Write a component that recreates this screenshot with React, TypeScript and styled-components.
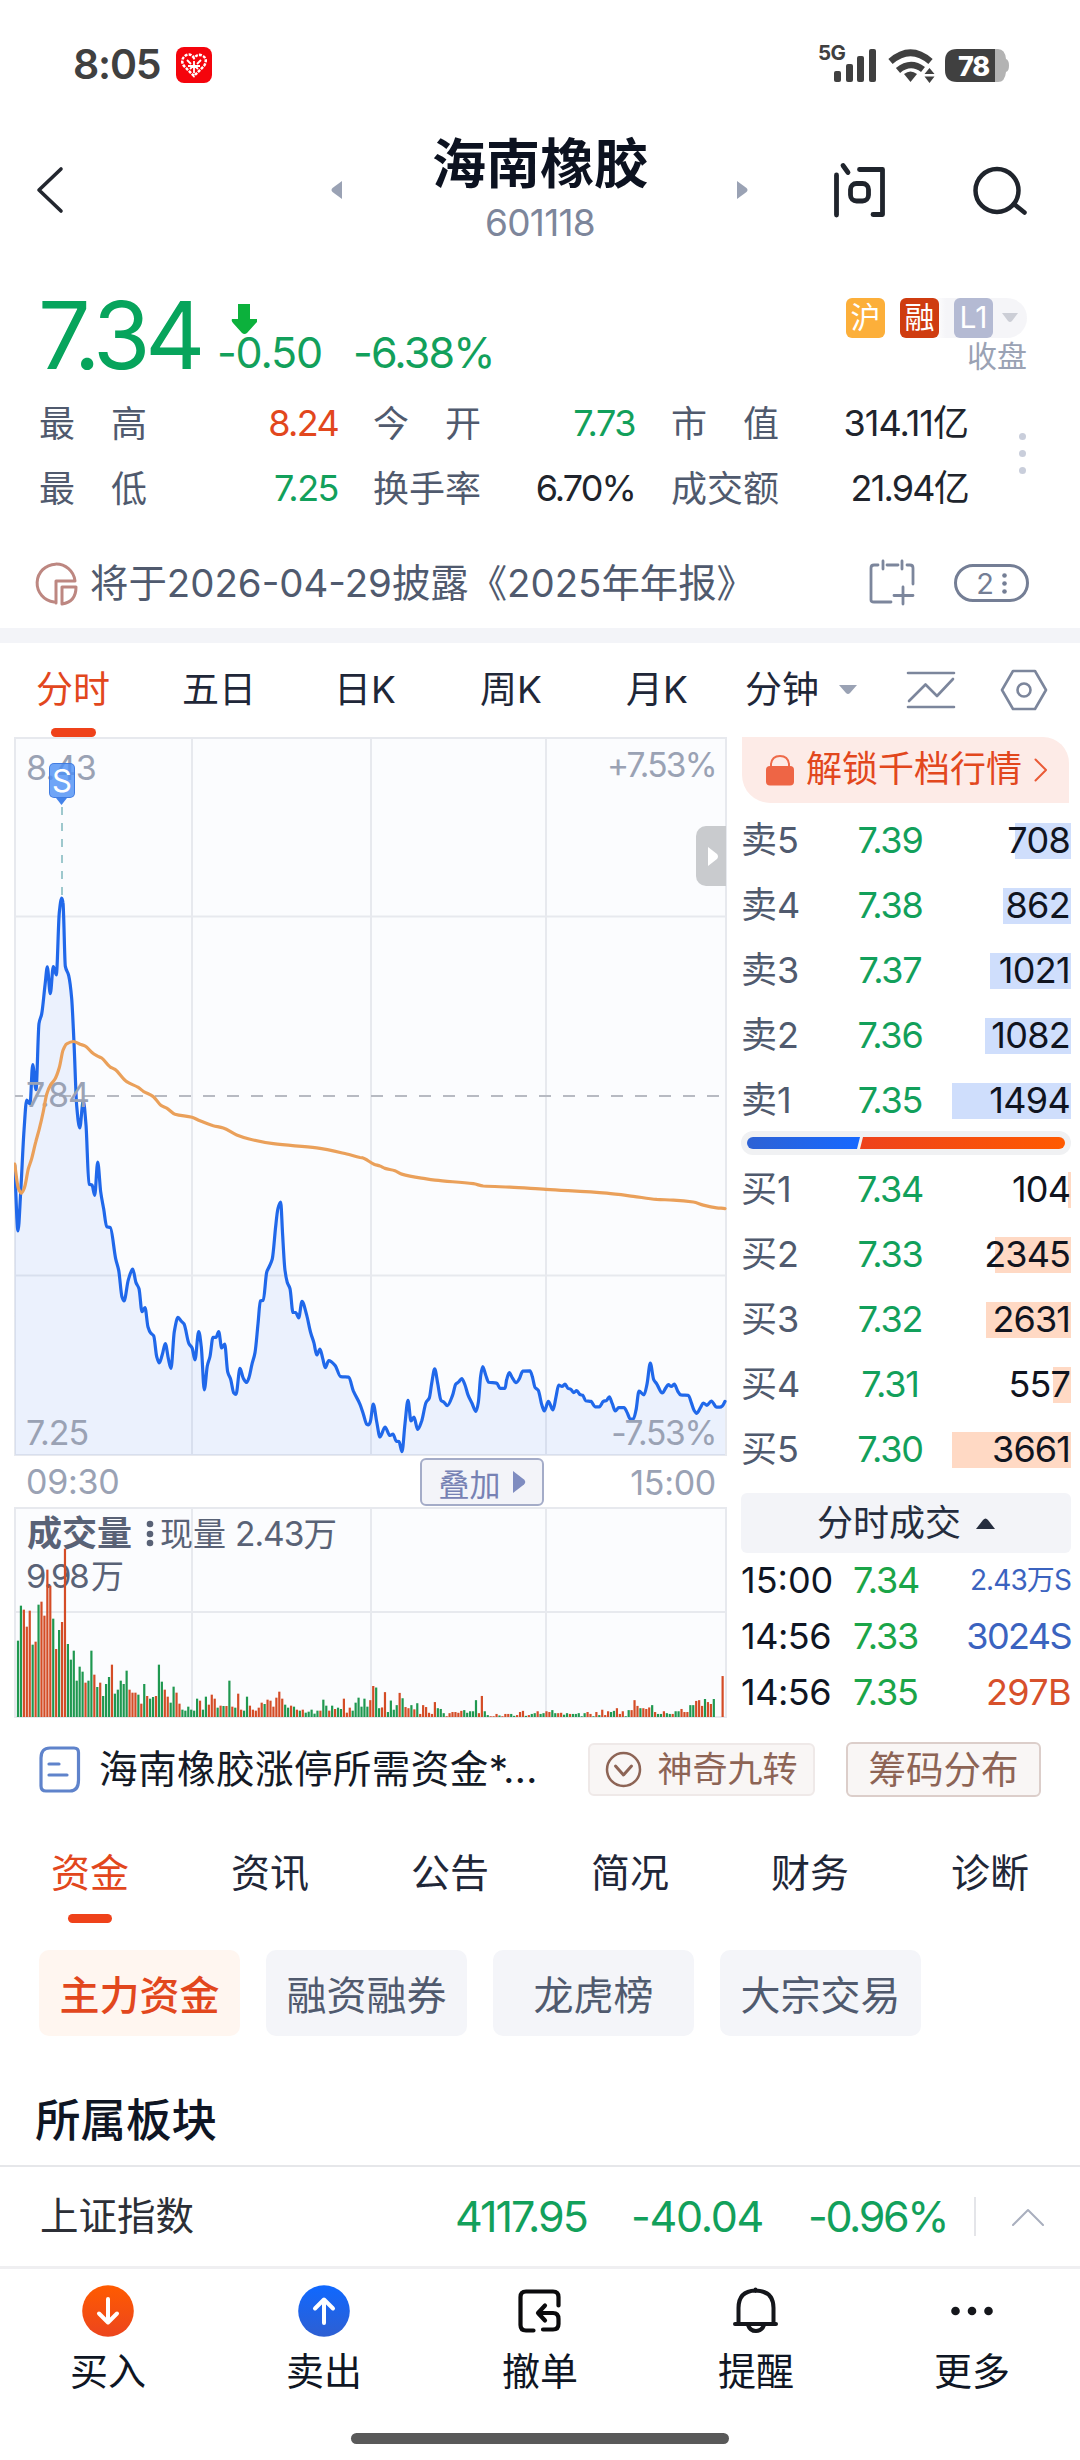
import React from "react";
import styled, { createGlobalStyle } from "styled-components";

const GREEN = "#12a05b";
const RED = "#e2471d";
const INK = "#0f1624";
const SLATE = "#505a6e";
const MUTED = "#9aa2b4";

const GlobalStyle = createGlobalStyle`
  * { box-sizing: border-box; }
  body {
    margin: 0;
    background: #fff;
    font-family: Inter, "Noto Sans CJK SC", sans-serif;
    color: ${INK};
  }
  svg { display: block; flex: none; }
`;

const Screen = styled.main`
  width: 1080px;
  height: 2460px;
  display: flex;
  flex-direction: column;
  overflow: hidden;
  background: #fff;
`;

const Text = styled.span<{ size?: number; color?: string; weight?: number; ls?: number }>`
  font-size: ${(p) => p.size ?? 36}px;
  color: ${(p) => p.color ?? "inherit"};
  font-weight: ${(p) => p.weight ?? 400};
  letter-spacing: ${(p) => p.ls ?? 0}px;
  line-height: 1.2;
  white-space: nowrap;
`;

/* ---------- status bar ---------- */

const StatusBar = styled.div`
  height: 130px;
  padding: 0 71px 0 73px;
  display: flex;
  align-items: center;
  justify-content: space-between;
  flex: none;
`;

const StatusGroup = styled.div`
  display: flex;
  align-items: center;
`;

const AppBadge = styled.div`
  width: 36px;
  height: 36px;
  margin-left: 16px;
  border-radius: 8px;
  background: #f5040c;
  display: flex;
  align-items: center;
  justify-content: center;
`;

/* ---------- header ---------- */

const Header = styled.header`
  height: 140px;
  padding: 0 52px 0 34px;
  display: grid;
  grid-template-columns: 32px 277px 394px 1fr auto;
  align-items: start;
  flex: none;
`;

const HeaderIcon = styled.div<{ top: number; align?: string }>`
  padding-top: ${(p) => p.top}px;
  display: flex;
  justify-content: ${(p) => p.align ?? "flex-start"};
`;

const TitleBlock = styled.div`
  padding-top: 3px;
  display: flex;
  flex-direction: column;
  align-items: center;
  gap: 3px;
`;

const HeaderTools = styled.div`
  display: flex;
  gap: 86px;
  padding-top: 31px;
`;

/* ---------- quote ---------- */

const Quote = styled.section`
  height: 358px;
  display: flex;
  flex-direction: column;
  flex: none;
`;

const PriceRow = styled.div`
  height: 121px;
  padding: 0 53px 0 38px;
  display: flex;
  justify-content: space-between;
`;

const PriceGroup = styled.div`
  display: flex;
`;

const ChangeBlock = styled.div`
  padding: 34px 0 0 17px;
  display: flex;
  flex-direction: column;
`;

const ChangeLine = styled.div`
  display: flex;
  gap: 31px;
  margin-top: -7px;
`;

const TagColumn = styled.div`
  display: flex;
  flex-direction: column;
  align-items: flex-end;
  padding-top: 28px;
`;

const TagPill = styled.div`
  height: 40px;
  display: flex;
  align-items: center;
  gap: 15px;
  border-radius: 8px 20px 20px 8px;
  padding-right: 9px;
  background: linear-gradient(90deg, transparent 0, transparent 88px, #f5f5f8 100px);
`;

const Tag = styled.span<{ bg: string }>`
  width: 39px;
  height: 40px;
  border-radius: 6px;
  background: ${(p) => p.bg};
  color: #fff;
  font-size: 30px;
  line-height: 39px;
  text-align: center;
`;

const Stats = styled.div`
  height: 130px;
  padding-left: 39px;
  display: grid;
  grid-template-columns: 299px 35px 262px 36px 297px 1fr;
  grid-template-rows: 65px 65px;
  align-items: center;
`;

const Stat = styled.div`
  display: flex;
  justify-content: space-between;
  align-items: center;
`;

const StatLabel = styled.span`
  width: 108px;
  font-size: 36px;
  color: ${SLATE};
  line-height: 44px;
  display: flex;
  justify-content: space-between;
`;

const MoreDots = styled.div`
  grid-row: 1 / 3;
  grid-column: 6;
  display: flex;
  flex-direction: column;
  align-items: center;
  gap: 10px;
  padding: 0 3px 6px 0;
  align-self: center;
  i { width: 7px; height: 7px; border-radius: 50%; background: #c9cedb; }
`;

const Notice = styled.div`
  height: 90px;
  margin-top: 17px;
  padding: 0 51px 0 35px;
  display: flex;
  align-items: center;
`;

const CountPill = styled.span`
  width: 75px;
  height: 38px;
  border: 3px solid #747e95;
  border-radius: 19px;
  display: flex;
  align-items: center;
  justify-content: center;
  gap: 8px;
  margin-left: 39px;
  font-size: 29px;
  color: #747e95;
`;

const Band = styled.div`
  height: 15px;
  background: #f3f4f8;
  flex: none;
`;

/* ---------- period tabs ---------- */

const PeriodTabs = styled.nav`
  height: 94px;
  display: grid;
  grid-template-columns: 146px 146px 146px 146px 146px 142px 118px 1fr;
  align-items: center;
  justify-items: center;
  padding-right: 22px;
  flex: none;
`;

const PeriodTab = styled.div<{ active?: boolean; menu?: boolean }>`
  height: 94px;
  display: flex;
  flex-direction: ${(p) => (p.menu ? "row" : "column")};
  gap: ${(p) => (p.menu ? 20 : 0)}px;
  align-items: center;
  justify-content: space-between;
  font-size: 37px;
  line-height: 94px;
  color: ${(p) => (p.active ? "#e2471d" : "#1f2738")};
  white-space: nowrap;
`;

const Underline = styled.i`
  width: 45px;
  height: 9px;
  border-radius: 5px;
  background: #ef421a;
  margin-top: -9px;
  flex: none;
`;

/* ---------- market area ---------- */

const Market = styled.section`
  height: 980px;
  padding-left: 14px;
  display: grid;
  grid-template-columns: 713px 330px;
  column-gap: 14px;
  flex: none;
`;

const ChartColumn = styled.div`
  display: flex;
  flex-direction: column;
`;

const Plot = styled.div<{ h: number }>`
  position: relative;
  height: ${(p) => p.h}px;
`;

const Overlay = styled.span<{ top: number; left?: number; right?: number; size?: number; color?: string; weight?: number; ls?: number }>`
  position: absolute;
  top: ${(p) => p.top}px;
  ${(p) => (p.left !== undefined ? `left: ${p.left}px;` : "")}
  ${(p) => (p.right !== undefined ? `right: ${p.right}px;` : "")}
  font-size: ${(p) => p.size ?? 34}px;
  font-weight: ${(p) => p.weight ?? 400};
  letter-spacing: ${(p) => p.ls ?? 0}px;
  line-height: 40px;
  color: ${(p) => p.color ?? MUTED};
  white-space: nowrap;
`;

const LineLayer = styled.svg`
  position: absolute;
  left: 0;
  top: 0;
`;

const Marker = styled.div`
  position: absolute;
  left: 35px;
  top: 26px;
  width: 26px;
  height: 35px;
  border-radius: 5px;
  border: 1.5px solid rgba(58, 117, 222, 0.85);
  background: rgba(76, 142, 245, 0.8);
  color: #fff;
  font-size: 31px;
  line-height: 33px;
  text-align: center;
  display: flex;
  justify-content: center;
`;

const Drawer = styled.div`
  position: absolute;
  right: 1px;
  top: 89px;
  width: 30px;
  height: 60px;
  padding-left: 4px;
  border-radius: 10px 0 0 10px;
  background: #c9cbce;
  display: flex;
  align-items: center;
  justify-content: center;
`;

const TimeAxis = styled.div`
  height: 51px;
  padding: 1px 11px 0 12px;
  display: grid;
  grid-template-columns: 394px 124px 1fr;
  align-items: center;
`;

const AxisEnd = styled.span`
  font-size: 34px;
  letter-spacing: -0.3px;
  line-height: 41px;
  color: ${MUTED};
  text-align: right;
`;

const OverlayButton = styled.span`
  height: 48px;
  border: 2px solid #a4acc8;
  border-radius: 6px;
  background: #f3f4f9;
  color: #7782b4;
  font-size: 31px;
  display: flex;
  align-items: center;
  justify-content: center;
  gap: 12px;
`;

const Book = styled.aside`
  display: flex;
  flex-direction: column;
`;

const Unlock = styled.div`
  width: 327px;
  height: 66px;
  margin-left: 1px;
  padding-left: 24px;
  border-radius: 0 26px 0 28px;
  background: #fdebe7;
  color: ${RED};
  display: flex;
  align-items: center;
  gap: 12px;
  flex: none;
`;

const Levels = styled.div<{ mt: number }>`
  margin-top: ${(p) => p.mt}px;
  display: flex;
  flex-direction: column;
`;

const Level = styled.div`
  height: 65px;
  display: grid;
  grid-template-columns: 87px 124px 119px;
  align-items: center;
`;

const Center = styled.div`
  text-align: center;
  line-height: 0;
`;

const Depth = styled.div<{ w: number; tone: string }>`
  height: 36px;
  display: flex;
  align-items: center;
  justify-content: flex-end;
  padding-right: 1px;
  background: linear-gradient(${(p) => p.tone}, ${(p) => p.tone}) right / ${(p) => p.w}px 100% no-repeat;
`;

const Ratio = styled.div`
  width: 330px;
  height: 24px;
  margin-top: -2px;
  padding: 6px;
  border-radius: 12px;
  background: #f0f1f3;
  display: flex;
  flex: none;
`;

const SellShare = styled.i`
  width: 113px;
  border-radius: 6px 0 0 6px;
  background: linear-gradient(90deg, #2e62d4, #1668ff);
  clip-path: polygon(0 0, 100% 0, calc(100% - 3px) 100%, 0 100%);
`;

const BuyShare = styled.i`
  flex: 1;
  border-radius: 0 6px 6px 0;
  background: linear-gradient(90deg, #ee421c, #ff5a00);
  clip-path: polygon(3px 0, 100% 0, 100% 100%, 0 100%);
`;

const TradesHead = styled.div`
  height: 60px;
  margin-top: 11px;
  padding-top: 1px;
  border-radius: 6px;
  background: #f3f4f8;
  color: #252d3e;
  display: flex;
  align-items: center;
  justify-content: center;
  gap: 15px;
  flex: none;
`;

const Trade = styled.div`
  height: 56px;
  display: grid;
  grid-template-columns: 112px 1fr auto;
  align-items: center;
  flex: none;
`;

/* ---------- lower sections ---------- */

const NewsRow = styled.div`
  height: 104px;
  padding: 0 39px;
  display: flex;
  align-items: center;
  flex: none;
`;

const NewsTitle = styled.span`
  width: 489px;
  margin-left: 18px;
  font-size: 38.6px;
  letter-spacing: 0.4px;
  line-height: 50px;
  color: #141a26;
  white-space: nowrap;
`;

const ToolButton = styled.span<{ w: number; h: number; edge: string; ml?: number }>`
  width: ${(p) => p.w}px;
  height: ${(p) => p.h}px;
  margin-left: ${(p) => p.ml ?? 0}px;
  border: 2px solid ${(p) => p.edge};
  border-radius: 6px;
  background: #f9f6f5;
  color: #8d6455;
  display: flex;
  align-items: center;
  justify-content: center;
  gap: 15px;
  flex: none;
`;

const SectionTabs = styled.nav`
  height: 110px;
  display: grid;
  grid-template-columns: repeat(6, 180px);
  flex: none;
`;

const SectionTab = styled.div<{ active?: boolean }>`
  display: flex;
  flex-direction: column;
  align-items: center;
  padding-top: 24px;
  font-size: 39px;
  line-height: 56px;
  color: ${(p) => (p.active ? RED : "#1f2738")};
  i { margin-top: 13px; width: 44px; }
`;

const Chips = styled.div`
  height: 86px;
  margin-top: 19px;
  padding-left: 39px;
  display: flex;
  gap: 26px;
  flex: none;
`;

const Chip = styled.span<{ active?: boolean }>`
  width: 201px;
  height: 86px;
  border-radius: 10px;
  background: ${(p) => (p.active ? "#fff6f0" : "#f4f5f9")};
  color: ${(p) => (p.active ? RED : SLATE)};
  font-weight: ${(p) => (p.active ? 500 : 400)};
  font-size: 40px;
  display: flex;
  align-items: center;
  justify-content: center;
`;

const SectionTitle = styled.h2`
  margin: 0;
  height: 129px;
  padding: 55px 0 0 35px;
  font-size: 45.5px;
  font-weight: 500;
  line-height: 60px;
  flex: none;
`;

const IndexRow = styled.div`
  height: 104px;
  border-top: 2px solid #e6e7ea;
  border-bottom: 3px solid #efeff1;
  padding: 0 36px 0 40px;
  display: grid;
  grid-template-columns: 415px 176px 177px 166px 1fr;
  align-items: center;
  flex: none;
`;

const IndexToggle = styled.div`
  height: 39px;
  border-left: 2px solid #e4e5e9;
  display: flex;
  align-items: center;
  justify-content: flex-end;
`;

const BottomNav = styled.nav`
  height: 162px;
  padding-top: 16px;
  display: grid;
  grid-template-columns: repeat(5, 216px);
  flex: none;
`;

const NavItem = styled.div`
  display: flex;
  flex-direction: column;
  align-items: center;
  gap: 12px;
`;

const HomeBar = styled.div`
  width: 378px;
  height: 11px;
  border-radius: 6px;
  background: #595959;
  margin: 2px auto 0;
  flex: none;
`;

/* ---------- chart data ---------- */

type Pt = [number, number];

const toPoints = (flat: number[], ox: number, oy: number): Pt[] => {
  const out: Pt[] = [];
  for (let i = 0; i < flat.length; i += 2) out.push([ox + flat[i] / 3, oy + flat[i + 1] / 2.613]);
  return out;
};

const MORNING = [
  44, 745, 54, 917, 62, 815, 72, 655, 80, 575, 90, 585, 98, 482, 108, 548, 117, 375, 125, 350, 135, 275, 142, 227, 151,
  297, 160, 226, 169, 248, 178, 85, 185, 47, 189, 60, 196, 225, 206, 250, 215, 310, 222, 425, 230, 590, 239, 648, 250,
  577, 258, 640, 267, 795, 276, 797, 284, 824, 293, 737, 302, 815, 311, 860, 320, 906, 331, 908, 347, 990, 356, 1020,
  366, 1090, 372, 1100, 385, 1045, 398, 1017, 408, 1052, 417, 1068, 426, 1128, 435, 1117, 444, 1168, 452, 1184, 461,
  1191, 470, 1245, 478, 1262, 487, 1240, 496, 1211, 505, 1250, 513, 1276, 523, 1180, 534, 1143, 543, 1152, 552, 1160,
  567, 1212, 576, 1222, 585, 1254, 596, 1180, 604, 1220, 613, 1332, 622, 1270, 630, 1245, 639, 1195, 648, 1195, 656,
  1180, 665, 1223, 674, 1213, 683, 1285, 692, 1305, 701, 1340, 708, 1344, 720, 1276, 730, 1302, 740, 1313, 747, 1300,
  756, 1265, 765, 1235, 774, 1160, 781, 1100, 790, 1098, 800, 1025, 808, 1010, 817, 990, 827, 905, 834, 858, 842, 842,
  848, 930, 855, 1020, 862, 1052, 870, 1068, 879, 1130, 887, 1130, 896, 1144, 906, 1101, 920, 1137, 932, 1183, 942,
  1210, 950, 1241, 960, 1226, 968, 1250, 976, 1274, 986, 1256, 1005, 1268, 1022, 1298, 1046, 1299, 1060, 1335, 1080,
  1370, 1090, 1395, 1100, 1422, 1105, 1424,
];

const AFTERNOON = [
  31, 710, 40, 664, 50, 710, 60, 750, 75, 724, 90, 746, 99, 742, 109, 761, 117, 762, 126, 788, 135, 715, 144, 654, 153,
  708, 162, 698, 173, 730, 185, 708, 198, 660, 208, 648, 215, 610, 224, 572, 233, 610, 243, 654, 252, 659, 262, 668, 278,
  640, 287, 612, 296, 606, 305, 597, 315, 614, 324, 640, 336, 662, 348, 683, 355, 660, 362, 590, 368, 566, 377, 588, 386,
  607, 410, 609, 420, 623, 435, 623, 440, 600, 448, 582, 457, 595, 468, 608, 478, 598, 488, 578, 510, 577, 517, 592, 525,
  620, 535, 628, 545, 665, 553, 682, 565, 657, 579, 679, 588, 645, 596, 614, 606, 618, 615, 612, 624, 623, 632, 625, 641,
  634, 650, 629, 660, 639, 668, 641, 677, 655, 693, 657, 705, 671, 718, 671, 730, 657, 740, 654, 748, 645, 757, 663, 766,
  682, 776, 673, 792, 673, 801, 685, 810, 702, 820, 703, 828, 680, 837, 630, 852, 640, 861, 612, 871, 557, 881, 600, 890,
  611, 907, 635, 917, 622, 925, 613, 934, 618, 943, 612, 953, 630, 962, 640, 985, 641, 994, 660, 1002, 680, 1010, 688,
  1022, 672, 1030, 661, 1041, 667, 1054, 656, 1070, 672, 1080, 672, 1087, 669, 1095, 657,
];

const AVG_MORNING = [
  44, 742, 55, 805, 64, 818, 73, 805, 85, 755, 95, 728, 107, 685, 118, 650, 130, 605, 140, 560, 152, 535, 165, 520, 178,
  490, 189, 445, 200, 428, 220, 422, 240, 429, 256, 434, 275, 450, 290, 459, 305, 465, 330, 488, 345, 495, 380, 527, 415,
  542, 430, 552, 460, 566, 483, 589, 500, 596, 525, 612, 576, 620, 600, 629, 640, 642, 670, 648, 710, 666, 745, 676, 820,
  689, 950, 700, 1040, 716, 1080, 725,
];

const AVG_AFTERNOON = [
  5, 20, 42, 37, 60, 42, 75, 48, 105, 54, 125, 63, 195, 75, 225, 79, 340, 88, 370, 94, 450, 97, 558, 103, 740, 113, 820,
  121, 890, 129, 940, 131, 1000, 136, 1030, 144, 1070, 151, 1095, 153,
];

/* Smooth path that never overshoots its samples. */
const monotonePath = (p: Pt[]) => {
  const n = p.length;
  const d: number[] = [];
  for (let i = 0; i < n - 1; i++) d.push((p[i + 1][1] - p[i][1]) / (p[i + 1][0] - p[i][0]));
  const m = p.map((_, i) => {
    if (i === 0) return d[0];
    if (i === n - 1) return d[n - 2];
    if (d[i - 1] * d[i] <= 0) return 0;
    return (2 * d[i - 1] * d[i]) / (d[i - 1] + d[i]);
  });
  let s = `M${p[0][0].toFixed(1)} ${p[0][1].toFixed(1)}`;
  for (let i = 0; i < n - 1; i++) {
    const h = (p[i + 1][0] - p[i][0]) / 3;
    s += `C${(p[i][0] + h).toFixed(1)} ${(p[i][1] + m[i] * h).toFixed(1)} ${(p[i + 1][0] - h).toFixed(1)} ${(
      p[i + 1][1] - m[i + 1] * h
    ).toFixed(1)} ${p[i + 1][0].toFixed(1)} ${p[i + 1][1].toFixed(1)}`;
  }
  return s;
};

const pricePath = monotonePath([...toPoints(MORNING, 0, 880), ...toPoints(AFTERNOON, 360, 1150)]);
const averagePath = monotonePath([...toPoints(AVG_MORNING, 0, 880), ...toPoints(AVG_AFTERNOON, 360, 1150)]);

/* One entry a minute: tone (g falling, r rising) followed by its volume. */
const VOLUME_AM =
  "g229 g334 r322 r271 r319 g217 r226 g337 r346 r304 r442 r394 g295 r204 g261 r285 r505 g219 g172 g199 g109 g151 g136 r103 g109 g199 r127 g90 r103 g63 g99 g120 r157 g70 g82 g109 g99 g139 r82 r73 r73 g67 r40 g99 r63 g55 g60 r63 g157 g106 r82 r61 g43 g91 r73 r40 g22 g19 g31 g22 g19 g55 r49 g22 g61 r37 r67 r55 g28 r34 g33 r33 g109 r31 g28 r70 r22 g19 g61 r34 r22 r19 r28 r43 g39 r52 r49 r31 r58 r76 r55 g37 g28 r34 g31 r22 g19 r22 g13 g16 g22 g10 g19 r19 g52 g34 r19 g34 r24 g28 g24 r55 r13 r28 g19 g43 g58 g31 g55 g31";
const VOLUME_PM =
  "r44 r81 g77 g23 r25 r65 g13 g43 g19 g31 r63 g49 r26 r23 g31 r20 g36 r8 r31 r26 r11 r8 r39 g23 g21 g10 r2 r10 r13 r13 r11 r16 g18 g11 g15 g15 g44 r10 r55 g15 g5 r2 r2 r8 g4 r2 r8 r8 g8 g3 r5 r13 r16 g3 r5 g8 g10 r15 g8 g10 r15 r13 g18 g10 r10 r11 g6 g10 r8 g8 g8 g10 g2 g10 r13 r8 g2 r13 g5 r19 r5 r15 g13 g16 r23 r8 r15 g2 g18 r18 r44 r29 g23 r23 r21 r25 g31 r13 g8 g8 r15 g10 g8 r8 g15 g15 r21 r13 r13 g31 g31 r42 r44 r29 g47 r39 r34 g47 x0 x0 r107";

const parseBars = (src: string, x0: number, unit: number) =>
  src.split(" ").map((t, i) => ({ up: t[0] === "r", h: Number(t.slice(1)) / unit, x: x0 + i * 2.936 }));

const bars = [...parseBars(VOLUME_AM, 18, 3), ...parseBars(VOLUME_PM, 370.3, 2.613)];

const asks = [
  ["卖5", "7.39", "708", 56],
  ["卖4", "7.38", "862", 68],
  ["卖3", "7.37", "1021", 81],
  ["卖2", "7.36", "1082", 86],
  ["卖1", "7.35", "1494", 119],
] as const;
const bids = [
  ["买1", "7.34", "104", 3],
  ["买2", "7.33", "2345", 76],
  ["买3", "7.32", "2631", 85],
  ["买4", "7.31", "557", 18],
  ["买5", "7.30", "3661", 119],
] as const;

const stroke = (color: string, w: number) => ({
  fill: "none",
  stroke: color,
  strokeWidth: w,
  strokeLinecap: "round" as const,
  strokeLinejoin: "round" as const,
});

function StatusIcons() {
  return (
    <svg width="192" height="50" viewBox="817 38 192 50">
      <text x="818" y="58" fontFamily="Inter, sans-serif" fontSize="20.500" fontWeight="700" fill="#404040" letterSpacing="-.5">
        5G
      </text>
      <g fill="#404040">
        <rect x="834" y="69" width="7" height="11" rx="2" />
        <rect x="846" y="62" width="7" height="18" rx="2" />
        <rect x="857" y="54" width="7" height="26" rx="2" />
        <rect x="869" y="47" width="7" height="33" rx="2" />
        <path d="M904 72Q910.500 67 917 72L910.500 80Z" />
        <path d="M929.500 66l5 6h-10zM924.500 74.500h10l-5 6.500z" />
      </g>
      <g fill="none" stroke="#404040" strokeWidth="6.500">
        <path d="M890.500 59.500Q910.500 42 930.500 59.500" />
        <path d="M898 68.500Q910.500 58 923 67.500" />
      </g>
      <path d="M995 47h3q7 0 8 10q3 1 3 6.500t-3 6.500q-1 10-8 10h-3z" fill="#b3b3b3" />
      <path d="M957 47h38v33h-38q-12 0-12-12v-9q0-12 12-12z" fill="#404040" />
      <text x="973.500" y="73.500" textAnchor="middle" fontFamily="Inter, sans-serif" fontSize="27" fontWeight="800" fill="#fff" letterSpacing="-1.200">
        78
      </text>
    </svg>
  );
}

function PriceChart() {
  return (
    <svg width="713" height="719" viewBox="14 737 713 719">
      <rect x="15" y="738" width="711" height="717.500" fill="#fbfcfe" />
      <g stroke="#e7e9ee" strokeWidth="2" fill="none">
        <path d="M192 738V1455M371 738V1455M546 738V1455M15 916.500H726M15 1275.500H726" />
        <rect x="15" y="738" width="711" height="717" />
      </g>
      <path d={`${pricePath}V1455H15Z`} fill="#2f74ee" fillOpacity=".08" />
      <path d="M15 1096H726" stroke="#b7bac2" strokeWidth="2" strokeDasharray="12 12" strokeDashoffset="4" />
      <path d="M62 807V898" stroke="#7fb6bd" strokeWidth="1.500" strokeDasharray="8 8" />
      <path d={pricePath} {...stroke("#2068ea", 3.2)} />
    </svg>
  );
}

function AverageLine() {
  return (
    <LineLayer width="713" height="719" viewBox="14 737 713 719">
      <path d={averagePath} {...stroke("#eaa05a", 3.2)} />
      <path d="M56 798h11l-5.500 7z" fill="#4383ea" />
    </LineLayer>
  );
}

function VolumeChart() {
  return (
    <svg width="713" height="211" viewBox="14 1507 713 211">
      <g stroke="#e7e9ee" strokeWidth="2" fill="#fbfcfe">
        <rect x="15" y="1508" width="711" height="209" />
        <path d="M192 1507V1717M371 1507V1717M546 1507V1717M15 1612H726" />
      </g>
    </svg>
  );
}

function VolumeBars() {
  return (
    <LineLayer width="713" height="211" viewBox="14 1507 713 211">
      {bars.map((b, i) => (
        <rect key={i} x={b.x - 1.1} y={1717 - b.h} width="2.200" height={b.h} fill={b.up ? "#d44c26" : "#1f9850"} />
      ))}
      <g fill="#596276">
        <circle cx="150" cy="1524" r="3.300" />
        <circle cx="150" cy="1534" r="3.300" />
        <circle cx="150" cy="1543" r="3.300" />
      </g>
    </LineLayer>
  );
}

export default function App() {
  return (
    <Screen>
      <GlobalStyle />
      <StatusBar>
        <StatusGroup>
          <Text size={41} weight={600} color="#404040" ls={-1.2}>
            8:05
          </Text>
          <AppBadge>
            <svg width="26" height="25" viewBox="0 0 26 25">
              <path d="M13 23L3 13Q-1 7 4 3t9 2q4-5 9-2t1 10z" fill="none" stroke="#fff" strokeWidth="2.500" strokeDasharray="3 1.200" />
              <path d="M6 7l4 4M20 7l-4 4M7 13h12M13 8v12M9 16l4-4 4 4" stroke="#fff" strokeWidth="1.800" fill="none" />
            </svg>
          </AppBadge>
        </StatusGroup>
        <StatusIcons />
      </StatusBar>

      <Header>
        <HeaderIcon top={35}>
          <svg width="30" height="50" viewBox="34 165 30 50">
            <path d="M61 169L39 190L61 211" {...stroke("#23272f", 3.6)} />
          </svg>
        </HeaderIcon>
        <HeaderIcon top={51} align="flex-end">
          <svg width="12" height="18" viewBox="0 0 12 18">
            <path d="M11 0v18L1.500 11q-2-2 0-4z" fill={MUTED} />
          </svg>
        </HeaderIcon>
        <TitleBlock>
          <Text size={54} weight={700} color="#0c1220">
            海南橡胶
          </Text>
          <Text size={37} color="#7d869b" ls={-0.7}>
            601118
          </Text>
        </TitleBlock>
        <HeaderIcon top={51}>
          <svg width="12" height="18" viewBox="0 0 12 18">
            <path d="M0 0v18l9.500-7q2-2 0-4z" fill={MUTED} />
          </svg>
        </HeaderIcon>
        <HeaderTools>
          <svg width="53" height="58" viewBox="835 160 53 58">
            <path d="M838.500 174V214M845 164.500L850 171.500M861.500 168.500H884.500V213.500H875" {...stroke("#1f242c", 4.8)} />
            <rect x="852.500" y="182.500" width="18" height="17.500" rx="6" {...stroke("#1f242c", 4.8)} />
          </svg>
          <svg width="56" height="54" viewBox="972 160 56 54">
            <circle cx="997" cy="189.500" r="21.500" {...stroke("#1f242c", 4.5)} />
            <path d="M1014 203L1024.500 211.500" {...stroke("#1f242c", 4.5)} />
          </svg>
        </HeaderTools>
      </Header>

      <Quote>
        <PriceRow>
          <PriceGroup>
            <Text size={93} weight={400} color="#07a45c" ls={-5.2} style={{ lineHeight: "130px" }}>
              7.34
            </Text>
            <ChangeBlock>
              <svg width="40" height="30" viewBox="217 303 40 30">
                <path d="M238 303h12v15h7q1 2-1 4l-9 10q-2.500 2-5 0l-9-10q-2-2-1-4h6z" fill="#0cb13c" />
              </svg>
              <ChangeLine>
                <Text size={43} color={GREEN} ls={-1.2}>
                  -0.50
                </Text>
                <Text size={43} color={GREEN} ls={-1.8}>
                  -6.38%
                </Text>
              </ChangeLine>
            </ChangeBlock>
          </PriceGroup>
          <TagColumn>
            <TagPill>
              <Tag bg="#fcaf3a">沪</Tag>
              <Tag bg="#cf3c10">融</Tag>
              <Tag bg="#b4bad3">L1</Tag>
              <svg width="16" height="10" viewBox="0 0 16 10" style={{ marginLeft: -6 }}>
                <path d="M0 0h16l-6 8q-2 2-4 0z" fill="#ccced6" />
              </svg>
            </TagPill>
            <Text size={30} color={MUTED}>
              收盘
            </Text>
          </TagColumn>
        </PriceRow>
        <Stats>
          <Stat>
            <StatLabel>
              <span>最</span>
              <span>高</span>
            </StatLabel>
            <Text color={RED} ls={-1.7}>8.24</Text>
          </Stat>
          <i />
          <Stat>
            <StatLabel>
              <span>今</span>
              <span>开</span>
            </StatLabel>
            <Text color={GREEN} ls={-1.5}>7.73</Text>
          </Stat>
          <i />
          <Stat>
            <StatLabel>
              <span>市</span>
              <span>值</span>
            </StatLabel>
            <Text color="#20242c" ls={-1}>314.11亿</Text>
          </Stat>
          <MoreDots>
            <i />
            <i />
            <i />
          </MoreDots>
          <Stat>
            <StatLabel>
              <span>最</span>
              <span>低</span>
            </StatLabel>
            <Text color={GREEN} ls={-1.5}>7.25</Text>
          </Stat>
          <i />
          <Stat>
            <StatLabel>换手率</StatLabel>
            <Text color="#20242c" ls={-1.9}>6.70%</Text>
          </Stat>
          <i />
          <Stat>
            <StatLabel>成交额</StatLabel>
            <Text color="#20242c" ls={-1.8}>21.94亿</Text>
          </Stat>
        </Stats>
        <Notice>
          <svg width="43" height="45" viewBox="35 561 43 45">
            <path d="M54 602A19 19 0 1 1 75 581H56V603" {...stroke("#bd8781", 3)} />
            <path d="M62 587H76Q76 602 62 604Z" {...stroke("#bd8781", 3)} />
          </svg>
          <Text size={38.4} color={SLATE} ls={0} style={{ marginLeft: 12, flex: 1 }}>
            将于2026-04-29披露《2025年年报》
          </Text>
          <svg width="46" height="48" viewBox="870 559 46 48">
            <path d="M879 565H875Q872 565 872 568V600Q872 602 875 602H892M888 565H899M908 565H911Q914 565 914 568V584M884 561V569M903 561V569M904 587V604M895 595.500H914" {...stroke("#7c869c", 2.8)} />
          </svg>
          <CountPill>
            2
            <svg width="5" height="21" viewBox="0 0 5 21" fill="#747e95">
              <circle cx="2.500" cy="2.500" r="2.300" />
              <circle cx="2.500" cy="10.500" r="2.300" />
              <circle cx="2.500" cy="18.500" r="2.300" />
            </svg>
          </CountPill>
        </Notice>
      </Quote>
      <Band />

      <PeriodTabs>
        <PeriodTab active>
          分时
          <Underline />
        </PeriodTab>
        <PeriodTab>五日</PeriodTab>
        <PeriodTab>日K</PeriodTab>
        <PeriodTab>周K</PeriodTab>
        <PeriodTab>月K</PeriodTab>
        <PeriodTab menu>
          分钟
          <svg width="18" height="10" viewBox="0 0 18 10">
            <path d="M0 0h18l-7 8q-2 2-4 0z" fill={MUTED} />
          </svg>
        </PeriodTab>
        <svg width="50" height="38" viewBox="906 667 50 38">
          <path d="M908 669H954M908 703H954M909 697L925.500 680.500L937 692L953 675" {...stroke("#7c869c", 2.6)} />
        </svg>
        <svg width="50" height="44" viewBox="999 664 50 44">
          <path d="M1013 667H1035L1046 686L1035 705H1013L1002 686Z" {...stroke("#7c869c", 2.6)} />
          <circle cx="1024" cy="686" r="6.500" {...stroke("#7c869c", 2.6)} />
        </svg>
      </PeriodTabs>

      <Market>
        <ChartColumn>
          <Plot h={719}>
            <PriceChart />
            <Overlay top={11} left={12} ls={-0.8}>8.43</Overlay>
            <Overlay top={8} right={11} size={33.5} ls={-1.7}>+7.53%</Overlay>
            <Overlay top={338} left={12} ls={-1}>7.84</Overlay>
            <Overlay top={676} left={12} ls={-1}>7.25</Overlay>
            <Overlay top={676} right={11} size={33.5} ls={-1.3}>-7.53%</Overlay>
            <Marker>S</Marker>
            <AverageLine />
            <Drawer>
              <svg width="12" height="19" viewBox="0 0 12 19">
                <path d="M1 0l9 7q2 2.500 0 5l-9 7z" fill="#fff" />
              </svg>
            </Drawer>
          </Plot>
          <TimeAxis>
            <Text size={34} color={MUTED} ls={-0.3}>09:30</Text>
            <OverlayButton>
              叠加
              <svg width="13" height="22" viewBox="0 0 13 22">
                <path d="M0 0l11 8.500q2.500 2.500 0 5l-11 8.500z" fill="#7f8cc0" />
              </svg>
            </OverlayButton>
            <AxisEnd>15:00</AxisEnd>
          </TimeAxis>
          <Plot h={210}>
            <VolumeChart />
            <Overlay top={6} left={13} size={35} weight={700} color="#596276">成交量</Overlay>
            <Overlay top={7} left={146} size={33} color="#596276">现量</Overlay>
            <Overlay top={7} left={221} size={33.5} color="#596276" ls={-1}>2.43万</Overlay>
            <Overlay top={49} left={12} size={33} color="#596276" ls={-2}>9.98</Overlay>
            <Overlay top={49} left={77} size={33} color="#596276">万</Overlay>
            <VolumeBars />
          </Plot>
        </ChartColumn>

        <Book>
          <Unlock>
            <svg width="28" height="32" viewBox="0 0 28 32">
              <path d="M5 12V10Q6 2 14 2T23 10V12" {...stroke("#ee6a49", 2)} />
              <rect x="0" y="12" width="28" height="19.500" rx="4" fill="#ee6545" />
            </svg>
            <Text size={36}>解锁千档行情</Text>
            <svg width="14" height="24" viewBox="0 0 14 24">
              <path d="M1.500 1.500L12 12L1.500 22.500" {...stroke("#ea5a36", 2)} />
            </svg>
          </Unlock>
          <Levels mt={5}>
            {asks.map(([name, price, vol, w]) => (
              <Level key={name}>
                <Text color={SLATE}>{name}</Text>
                <Center>
                  <Text color={GREEN} ls={-1.2}>{price}</Text>
                </Center>
                <Depth w={w} tone="#cfdefc">
                  <Text color="#10141f" ls={-0.7}>{vol}</Text>
                </Depth>
              </Level>
            ))}
          </Levels>
          <Ratio>
            <SellShare />
            <BuyShare />
          </Ratio>
          <Levels mt={2}>
            {bids.map(([name, price, vol, w]) => (
              <Level key={name}>
                <Text color={SLATE}>{name}</Text>
                <Center>
                  <Text color={GREEN} ls={-1.2}>{price}</Text>
                </Center>
                <Depth w={w} tone="#ffd9c4">
                  <Text color="#10141f" ls={-0.9}>{vol}</Text>
                </Depth>
              </Level>
            ))}
          </Levels>
          <TradesHead>
            <Text size={36}>分时成交</Text>
            <svg width="19" height="11" viewBox="0 0 19 11">
              <path d="M0 11h19l-7-9q-2.500-3-5 0z" fill="#252d3e" />
            </svg>
          </TradesHead>
          <Trade>
            <Text>15:00</Text>
            <Text color="#1ba548" ls={-1.2}>7.34</Text>
            <Text size={28} color="#3b63bf" ls={-0.9}>2.43万S</Text>
          </Trade>
          <Trade>
            <Text ls={-0.5}>14:56</Text>
            <Text color="#1ba548" ls={-1.2}>7.33</Text>
            <Text color="#3b63bf" ls={-1.6}>3024S</Text>
          </Trade>
          <Trade>
            <Text ls={-0.5}>14:56</Text>
            <Text color="#1ba548" ls={-1.2}>7.35</Text>
            <Text color="#d7502b" ls={-0.6}>297B</Text>
          </Trade>
        </Book>
      </Market>

      <NewsRow>
        <svg width="42" height="47" viewBox="0 0 42 47">
          <path d="M11 2H35Q39.500 2 39.500 6.500V34Q39.500 45 31 45H7Q2 45 2 40V12Q2 2 11 2Z" {...stroke("#5f83cb", 3.2)} />
          <path d="M10 18H20M10 29H28" {...stroke("#5f83cb", 3.2)} />
        </svg>
        <NewsTitle>海南橡胶涨停所需资金*...</NewsTitle>
        <ToolButton w={227} h={53} edge="#efe9e8">
          <svg width="37" height="37" viewBox="0 0 37 37">
            <circle cx="18.500" cy="18.500" r="16.500" {...stroke("#8d6455", 2.5)} />
            <path d="M10.500 15L18.500 24L26.500 15" {...stroke("#8d6455", 3)} />
          </svg>
          <Text size={35}>神奇九转</Text>
        </ToolButton>
        <ToolButton w={195} h={55} edge="#dcceca" ml={31}>
          <Text size={37.5}>筹码分布</Text>
        </ToolButton>
      </NewsRow>

      <SectionTabs>
        {["资金", "资讯", "公告", "简况", "财务", "诊断"].map((t, i) => (
          <SectionTab key={t} active={i === 0}>
            {t}
            {i === 0 && <Underline />}
          </SectionTab>
        ))}
      </SectionTabs>

      <Chips>
        <Chip active>主力资金</Chip>
        <Chip>融资融券</Chip>
        <Chip>龙虎榜</Chip>
        <Chip>大宗交易</Chip>
      </Chips>

      <SectionTitle>所属板块</SectionTitle>

      <IndexRow>
        <Text size={38.5} color="#2c2f36">上证指数</Text>
        <Text size={43} color={GREEN} ls={-2}>4117.95</Text>
        <Text size={43} color={GREEN} ls={-1.3}>-40.04</Text>
        <Text size={43} color={GREEN} ls={-2.4}>-0.96%</Text>
        <IndexToggle>
          <svg width="32" height="18" viewBox="0 0 32 18">
            <path d="M1 17L16 2L31 17" {...stroke("#a9afbe", 2)} />
          </svg>
        </IndexToggle>
      </IndexRow>

      <BottomNav>
        <NavItem>
          <svg width="52" height="52" viewBox="0 0 52 52">
            <defs>
              <linearGradient id="buy" x1="0" y1="0" x2="0" y2="1">
                <stop offset="0" stopColor="#ff5b00" />
                <stop offset="1" stopColor="#ec451e" />
              </linearGradient>
            </defs>
            <circle cx="26" cy="26" r="25.800" fill="url(#buy)" />
            <path d="M26 14V37M17 28.500L26 37.500L35 28.500" {...stroke("#fff", 4)} />
          </svg>
          <Text size={38}>买入</Text>
        </NavItem>
        <NavItem>
          <svg width="52" height="52" viewBox="0 0 52 52">
            <defs>
              <linearGradient id="sell" x1="0" y1="0" x2="0" y2="1">
                <stop offset="0" stopColor="#0f68ff" />
                <stop offset="1" stopColor="#2e5fd2" />
              </linearGradient>
            </defs>
            <circle cx="26" cy="26" r="25.800" fill="url(#sell)" />
            <path d="M26 38V15M17 23.500L26 14.500L35 23.500" {...stroke("#fff", 4)} />
          </svg>
          <Text size={38}>卖出</Text>
        </NavItem>
        <NavItem>
          <svg width="52" height="52" viewBox="514 2286 52 52">
            <path d="M533.500 2331.500H526Q520.500 2331.500 520.500 2326V2298Q520.500 2292.500 526 2292.500H553Q558.500 2292.500 558.500 2298V2306.500M543 2330.500H553Q558.500 2330.500 558.500 2325V2320Q558.500 2314 553 2314H538M545 2306.500L538 2314L545 2321.500" {...stroke("#0b0b0d", 4.2)} />
          </svg>
          <Text size={38}>撤单</Text>
        </NavItem>
        <NavItem>
          <svg width="52" height="52" viewBox="730 2286 52 52">
            <path d="M735 2325H776M738.500 2324V2309Q738.500 2292 755.500 2291.500Q773.500 2292 773.500 2309V2324M755.500 2290.500V2292" {...stroke("#14161b", 4)} />
            <path d="M748 2326Q750 2332 756 2332T764 2326" {...stroke("#14161b", 4)} />
          </svg>
          <Text size={38}>提醒</Text>
        </NavItem>
        <NavItem>
          <svg width="52" height="52" viewBox="0 0 52 52" fill="#14161b">
            <circle cx="9.500" cy="26" r="4.300" />
            <circle cx="26" cy="26" r="4.300" />
            <circle cx="42.500" cy="26" r="4.300" />
          </svg>
          <Text size={38}>更多</Text>
        </NavItem>
      </BottomNav>
      <HomeBar />
    </Screen>
  );
}
